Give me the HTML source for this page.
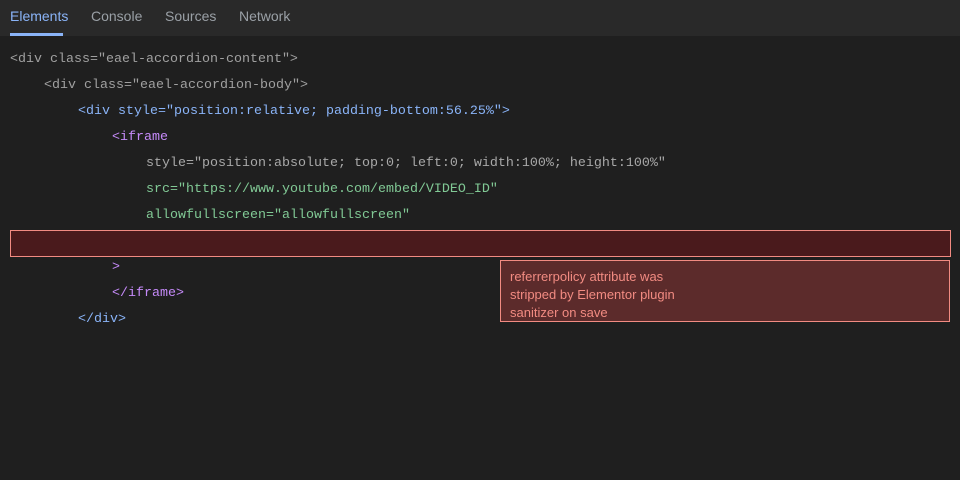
<!DOCTYPE html>
<html><head><meta charset="utf-8"><style>
body{margin:0;width:960px;height:480px;background:#1f1f1f;overflow:hidden;position:relative}
.bar{position:absolute;left:0;top:0;width:960px;height:36px;background:#292929;font:14px "Liberation Sans",sans-serif;color:#9aa0a6}
.bar span{position:absolute;top:8px}
.ul{position:absolute;left:10px;top:33px;width:53px;height:3px;background:#8ab4f8}
.l{position:absolute;font:13.33px "Courier New","Nimbus Mono PS","FreeMono","Liberation Mono",monospace;white-space:pre;line-height:16px}
.g{color:#a0a0a0}.b{color:#8ab4f8}.p{color:#c58af9}.gr{color:#81c995}.s{color:#a8a8a8}
.hl{position:absolute;left:10px;top:230px;width:939px;height:25px;background:#4a1a1c;border:1px solid #f28b82}
.tip{position:absolute;left:500px;top:260px;width:439px;height:53px;padding:7px 0 0 9px;background:#5c2b2b;border:1px solid #f28b82;color:#f28b82;font:13px/18px "Liberation Sans",sans-serif}
</style></head><body>
<div class="bar"><span style="left:10px;color:#8ab4f8">Elements</span><span style="left:91px">Console</span><span style="left:165px">Sources</span><span style="left:239px">Network</span><div class="ul"></div></div>
<div class="l g" style="left:10px;top:52px">&lt;div class="eael-accordion-content"&gt;</div>
<div class="l g" style="left:44px;top:78px">&lt;div class="eael-accordion-body"&gt;</div>
<div class="l b" style="left:78px;top:104px">&lt;div style="position:relative; padding-bottom:56.25%"&gt;</div>
<div class="l p" style="left:112px;top:130px">&lt;iframe</div>
<div class="l s" style="left:146px;top:156px">style="position:absolute; top:0; left:0; width:100%; height:100%"</div>
<div class="l gr" style="left:146px;top:182px">src="https://www.youtube.com/embed/VIDEO_ID"</div>
<div class="l gr" style="left:146px;top:208px">allowfullscreen="allowfullscreen"</div>
<div class="hl"></div>
<div class="l p" style="left:112px;top:260px">&gt;</div>
<div class="l p" style="left:112px;top:286px">&lt;/iframe&gt;</div>
<div class="l b" style="left:78px;top:312px">&lt;/div&gt;</div>
<div class="tip">referrerpolicy attribute was<br>stripped by Elementor plugin<br>sanitizer on save</div>
</body></html>
